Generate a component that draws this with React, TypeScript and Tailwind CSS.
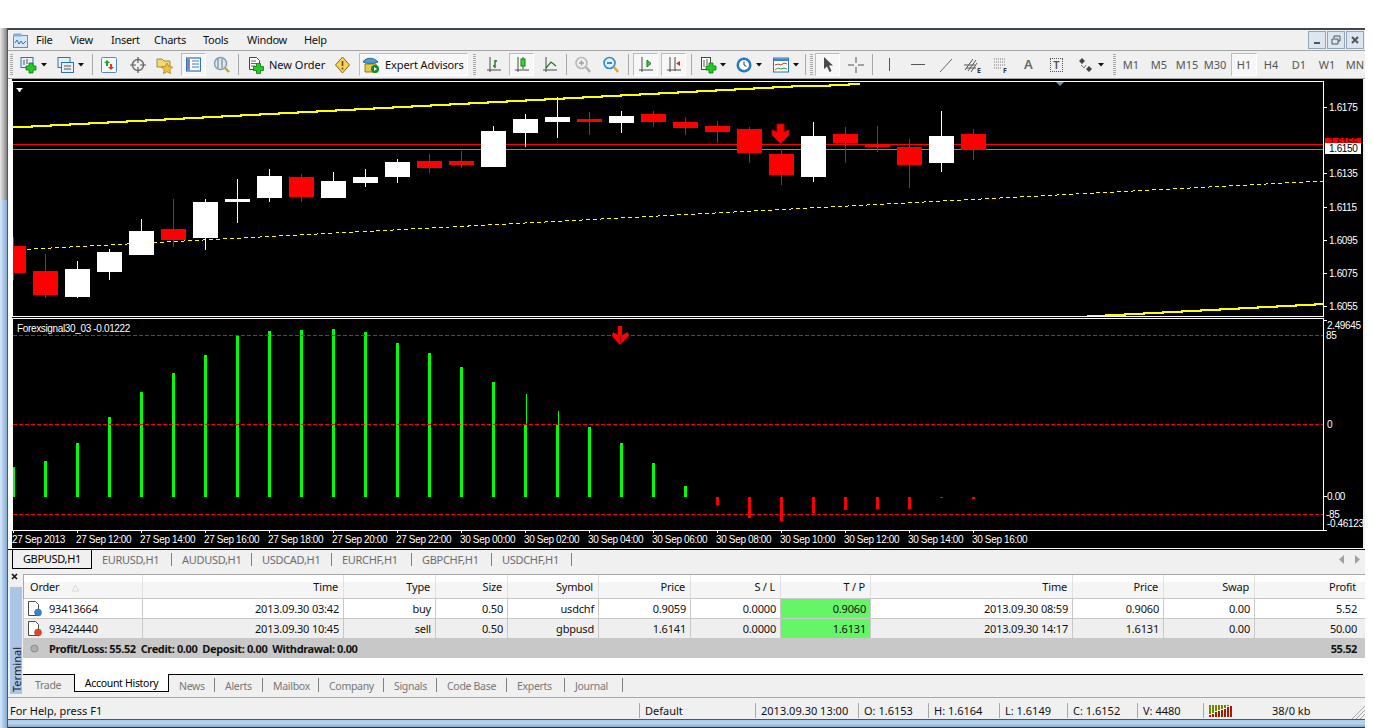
import type { ReactNode } from "react";

// candle: high, body top, body bottom, low, colour. x comes from the index
const candles: [number, number, number, number, "r" | "w"][] = [
  [237, 246, 273, 280, "r"],
  [254, 271, 295, 298, "r"],
  [261, 269, 297, 298, "w"],
  [249, 252, 272, 280, "w"],
  [219, 231, 255, 255, "w"],
  [199, 229, 240, 247, "r"],
  [199, 202, 238, 250, "w"],
  [179, 199, 202, 223, "w"],
  [169, 176, 198, 202, "w"],
  [174, 177, 197, 202, "r"],
  [172, 181, 198, 198, "w"],
  [169, 177, 183, 187, "w"],
  [159, 162, 177, 183, "w"],
  [154, 161, 168, 173, "r"],
  [151, 161, 165, 168, "r"],
  [126, 131, 167, 167, "w"],
  [114, 119, 133, 147, "w"],
  [97, 117, 122, 138, "w"],
  [112, 119, 122, 135, "r"],
  [111, 116, 123, 133, "w"],
  [111, 114, 122, 127, "r"],
  [117, 122, 128, 135, "r"],
  [121, 126, 132, 143, "r"],
  [127, 129, 153, 163, "r"],
  [149, 154, 175, 185, "r"],
  [122, 136, 177, 182, "w"],
  [127, 134, 143, 163, "r"],
  [126, 144, 147, 152, "r"],
  [139, 147, 165, 188, "r"],
  [111, 136, 163, 172, "w"],
  [129, 134, 150, 160, "r"],
];

// histogram end point for each bar, baseline is y=497
const bars = [
  467, 461, 443, 417, 392, 373, 355, 336, 331, 330, 329, 332, 343, 353, 367, 382, 425, 425, 427, 443, 463,
  486, 505, 518, 521, 513, 510, 509, 509, 498, 499,
];

const dates = [
  "27 Sep 2013",
  "27 Sep 12:00",
  "27 Sep 14:00",
  "27 Sep 16:00",
  "27 Sep 18:00",
  "27 Sep 20:00",
  "27 Sep 22:00",
  "30 Sep 00:00",
  "30 Sep 02:00",
  "30 Sep 04:00",
  "30 Sep 06:00",
  "30 Sep 08:00",
  "30 Sep 10:00",
  "30 Sep 12:00",
  "30 Sep 14:00",
  "30 Sep 16:00",
];

const prices: [string, number][] = [
  ["1.6175", 107],
  ["1.6135", 173],
  ["1.6115", 207],
  ["1.6095", 240],
  ["1.6075", 273],
  ["1.6055", 306],
];

const indicatorLabels: [string, number, number][] = [
  ["2.49645", 1327, 325],
  ["85", 1326, 335],
  ["0", 1327, 424],
  ["0.00", 1327, 496],
  ["-85", 1326, 514],
  ["-0.46123", 1327, 523],
];

function stairs(x0: number, y0: number, x1: number, slope: number) {
  let d = `M${x0} ${y0}`;
  for (let x = x0; x < x1; x += 19) {
    const y = Math.round(y0 - slope * (x - x0));
    const nx = Math.min(x + 19, x1);
    d += ` L${x} ${y} L${nx} ${y}`;
  }
  return d;
}

function ChartArea() {
  return (
    <svg
      width={1351}
      height={469}
      viewBox="12 79 1351 469"
      className="block shrink-0 bg-black font-['Liberation_Sans',sans-serif] tracking-[-0.35px]"
    >
      {/* price pane */}
      <line x1={13} y1={250} x2={1323} y2={181} stroke="#ffff00" strokeDasharray="4 3" shapeRendering="crispEdges" />
      <path d={stairs(13, 127, 860, 0.052)} stroke="#ffff00" strokeWidth={2} fill="none" shapeRendering="crispEdges" />
      <path d={stairs(1087, 316, 1323, 0.052)} stroke="#ffff00" strokeWidth={2} fill="none" shapeRendering="crispEdges" />
      <rect x={13} y={144} width={1310} height={1} fill="#ff0000" />
      <rect x={13} y={149} width={1310} height={1} fill="#8a8a8a" />
      {candles.map(([hi, top, bot, lo, c], i) => {
        const x = 13 + 32 * i;
        const color = c === "r" ? "#ff0000" : "#ffffff";
        return (
          <g key={x} fill={color}>
            <rect x={x} y={hi} width={1} height={lo - hi} />
            <rect x={x - 12} y={top} width={25} height={bot - top} />
          </g>
        );
      })}
      <polygon
        points="777,124 784,124 784,132 789,130 789,135 781,143 780,143 772,135 772,130 777,132"
        fill="#ff0000"
        stroke="#c00000"
      />
      <polygon points="16,88 23,88 21,90 20,92 19,92 18,90" fill="#ffffff" />
      <polygon points="1055,81 1065,81 1060,86" fill="#6f8ea3" />
      <rect x={12} y={81} width={1311} height={235} fill="none" stroke="#ffffff" strokeWidth={1} transform="translate(0.5 0.5)" />
      {prices.map(([label, y]) => (
        <g key={label}>
          <rect x={1324} y={y} width={3} height={1} fill="#ffffff" />
          <text x={1329} y={y + 4} className="fill-white text-[10px]">
            {label}
          </text>
        </g>
      ))}
      <rect x={1325} y={138} width={36} height={6} fill="#ff0000" />
      <text x={1329} y={146} className="fill-[#300] text-[10px]">
        1.6155
      </text>
      <rect x={1325} y={143} width={36} height={11} fill="#ffffff" />
      <text x={1329} y={152} className="fill-black text-[10px]">
        1.6150
      </text>

      {/* indicator pane */}
      {bars.map((end, i) => {
        const x = 12 + 32 * i;
        const color = end < 497 ? "#00ff00" : "#ff0000";
        return (
          <rect key={x} x={x} y={Math.min(end, 497)} width={3} height={Math.abs(497 - end)} fill={color} />
        );
      })}
      <rect x={526} y={394} width={1} height={31} fill="#00ff00" />
      <rect x={558} y={411} width={1} height={14} fill="#00ff00" />
      {[335, 424, 514].map((y) => (
        <line key={y} x1={13} y1={y + 0.5} x2={1323} y2={y + 0.5} stroke="#ff0000" strokeDasharray="4 2" />
      ))}
      <polygon points="618,326 622,326 622,335 628,332 629,336 621,344 619,344 612,336 613,332 618,335" fill="#ff0000" />
      <rect x={620} y={335} width={1} height={8} fill="#a00000" />
      <text x={17} y={332} className="fill-white text-[10px]">
        Forexsignal30_03 -0.01222
      </text>
      <rect x={12} y={318} width={1311} height={212} fill="none" stroke="#ffffff" strokeWidth={1} transform="translate(0.5 0.5)" />
      {[320, 496, 530].map((y) => (
        <rect key={y} x={1324} y={y} width={3} height={1} fill="#ffffff" />
      ))}
      {indicatorLabels.map(([label, x, y]) => (
        <text key={label} x={x} y={y + 4} className="fill-white text-[10px]">
          {label}
        </text>
      ))}
      {dates.map((label, i) => (
        <g key={label}>
          <rect x={13 + 64 * i} y={531} width={1} height={2} fill="#ffffff" />
          <text x={12 + 64 * i} y={543} className="fill-white text-[10px]">
            {label}
          </text>
        </g>
      ))}
    </svg>
  );
}

function Grip({ className }: { className: string }) {
  return (
    <div
      className={`h-[22px] w-[3px] shrink-0 bg-[repeating-linear-gradient(to_bottom,#a8a8a8_0,#a8a8a8_1px,#f0f0f0_1px,#f0f0f0_2px)] ${className}`}
    />
  );
}

function Sep({ className }: { className: string }) {
  return <div className={`h-[21px] w-px shrink-0 bg-[#a8a8a8] ${className}`} />;
}

function Caret({ className }: { className: string }) {
  return (
    <svg width={6} height={4} viewBox="0 0 6 4" className={`shrink-0 ${className}`}>
      <polygon points="0,0 6,0 3,3.5" fill="#111111" />
    </svg>
  );
}

function Ico({ w = 17, h = 18, className, children }: { w?: number; h?: number; className: string; children: ReactNode }) {
  return (
    <svg width={w} height={h} viewBox={`0 0 ${w} ${h}`} className={`shrink-0 ${className}`}>
      {children}
    </svg>
  );
}

function Box({ className, children }: { className: string; children: ReactNode }) {
  return (
    <div
      className={`flex h-[23px] shrink-0 items-center justify-center border border-b-white border-l-[#bcbcbc] border-r-white border-t-[#bcbcbc] bg-[#f7f7f7] ${className}`}
    >
      {children}
    </div>
  );
}

const plus = (x: number, y: number) => (
  <path
    d={`M${x + 3} ${y}h4v3h3v4h-3v3h-4v-3h-3v-4h3z`}
    fill="#22cc22"
    stroke="#0a7a0a"
    strokeWidth={0.8}
  />
);

const axes = (
  <path d="M3 1v15M0 14h14" stroke="#4a4a4a" strokeWidth={1} fill="none" />
);

function Toolbar() {
  return (
    <div className="flex h-[28px] shrink-0 items-center overflow-hidden border-b border-[#a4a4a4] bg-[#f0f0f0]">
      <Grip className="ml-[2px]" />
      <Ico className="ml-[7px]">
        <rect x={1} y={1.5} width={12} height={10} fill="#e6f0fb" stroke="#2f72b8" />
        <path d="M4 4v5M7 3v5" stroke="#555555" />
        {plus(6, 7)}
      </Ico>
      <Caret className="ml-[4px]" />
      <Ico className="ml-[10px]">
        <rect x={1} y={1.5} width={12} height={10} fill="#e6f0fb" stroke="#2f72b8" />
        <rect x={4.5} y={6.5} width={12} height={10} fill="#e6f0fb" stroke="#2f72b8" />
        <path d="M7 10h7M7 13h7" stroke="#555555" />
      </Ico>
      <Caret className="ml-[4px]" />
      <Sep className="ml-[8px]" />
      <Ico w={16} className="ml-[8px]">
        <rect x={0.5} y={1.5} width={15} height={15} rx={1} fill="#f4f8fd" stroke="#4d8cc8" />
        <path d="M6 4l3 3H7v3H5V7H3z" fill="#1fa81f" />
        <path d="M10 14l-3-3h2V8h2v3h2z" fill="#e03b20" />
      </Ico>
      <Ico w={16} className="ml-[13px]">
        <circle cx={8} cy={9} r={5.5} fill="none" stroke="#6a6a6a" strokeWidth={1.4} />
        <path d="M8 1v6M8 11v6M0 9h6M10 9h6" stroke="#5a5a5a" strokeWidth={1.2} />
      </Ico>
      <Ico className="ml-[10px]">
        <path d="M1 3h5l2 2h6v6H1z" fill="#f3d778" stroke="#a68a30" />
        <path d="M11 7l1.8 3.6 3.9.5-2.9 2.7.8 3.9-3.6-2-3.6 2 .8-3.9-2.9-2.7 3.9-.5z" fill="#f2c13c" stroke="#a57d14" strokeWidth={0.7} />
      </Ico>
      <Box className="ml-[8px] w-[25px]">
        <Ico w={15} h={15} className="">
          <rect x={0.5} y={1} width={14} height={13} fill="#ffffff" stroke="#2f72b8" strokeWidth={1.2} />
          <rect x={1} y={1.5} width={3} height={12} fill="#5b9ad8" />
          <path d="M6 4h7M6 7h7M6 10h7" stroke="#3a78bc" />
          <path d="M2 4h1M2 7h1M2 10h1" stroke="#e03b20" />
        </Ico>
      </Box>
      <Ico className="ml-[7px]">
        <circle cx={7.5} cy={7.5} r={6} fill="#dbe9f6" stroke="#7a9ab8" strokeWidth={1.4} />
        <path d="M5 3v9M9 3v9" stroke="#707070" />
        <path d="M12 12l4 4" stroke="#c0a050" strokeWidth={2.4} />
      </Ico>
      <Sep className="ml-[8px]" />
      <Ico w={16} className="ml-[9px]">
        <path d="M1.5 1.5h7l3 3v9h-10z" fill="#ffffff" stroke="#444444" />
        <path d="M3 5h5M3 7.5h6M3 10h4" stroke="#666666" />
        {plus(5.5, 7.5)}
      </Ico>
      <span className="ml-[5px] w-[56px] shrink-0 whitespace-nowrap pt-[2px] text-[11px] text-[#111]">New Order</span>
      <Ico w={15} className="ml-[10px]">
        <polygon points="7.5,1 14.5,9 7.5,17 0.5,9" fill="#f7d25a" stroke="#8a6a10" />
        <path d="M7.5 5v5M7.5 11.5v2" stroke="#6b4a00" strokeWidth={1.6} />
      </Ico>
      <Box className="ml-[9px] w-[109px] justify-start pl-[2px]">
        <Ico w={18} className="">
          <path d="M3 8h11l1 8H3z" fill="#e5c94a" stroke="#977a1a" />
          <path d="M1 6c3-5 11-5 15 0-4 2-11 2-15 0z" fill="#4d9ad4" stroke="#2f6a9c" />
          <circle cx={13} cy={13} r={4} fill="#148a2c" />
          <path d="M12 11l3 2-3 2z" fill="#ffffff" />
        </Ico>
        <span className="ml-[5px] whitespace-nowrap pt-[2px] text-[11px] tracking-[-0.1px] text-[#111]">Expert Advisors</span>
      </Box>
      <Grip className="ml-[5px]" />
      <Ico w={14} className="ml-[11px]">
        {axes}
        <path d="M8 4v8M8 5h2M6 10h2" stroke="#177a17" strokeWidth={1.4} />
      </Ico>
      <Box className="ml-[8px] w-[25px]">
        <Ico w={14} className="">
          {axes}
          <path d="M8 1v12" stroke="#177a17" />
          <rect x={6} y={3} width={4} height={7} fill="#33d833" stroke="#177a17" />
        </Ico>
      </Box>
      <Ico w={14} className="ml-[9px]">
        {axes}
        <path d="M3 12l5-6 5 4" stroke="#177a17" strokeWidth={1.2} fill="none" />
      </Ico>
      <Sep className="ml-[9px]" />
      <Ico w={16} className="ml-[8px]">
        <circle cx={6.5} cy={7} r={5.5} fill="#eeeeee" stroke="#b8b8b8" strokeWidth={1.6} />
        <path d="M4 7h5M6.5 4.5v5" stroke="#a0a0a0" strokeWidth={1.4} />
        <path d="M11 11l4 5" stroke="#b0b0b0" strokeWidth={2.4} />
      </Ico>
      <Ico w={16} className="ml-[12px]">
        <circle cx={6.5} cy={7} r={5.5} fill="#dff0ff" stroke="#2f8ad0" strokeWidth={1.6} />
        <path d="M4 7h5" stroke="#1d6aa8" strokeWidth={1.6} />
        <path d="M11 11l4 5" stroke="#d8a830" strokeWidth={2.4} />
      </Ico>
      <Sep className="ml-[9px]" />
      <Box className="ml-[4px] w-[25px]">
        <Ico w={14} className="">
          {axes}
          <polygon points="8,4 12,7.5 8,11" fill="#44c844" stroke="#177a17" />
        </Ico>
      </Box>
      <Box className="ml-[3px] w-[25px]">
        <Ico w={14} className="">
          {axes}
          <path d="M8 1v14" stroke="#4a4a4a" />
          <polygon points="13,5 13,10 9,7.5" fill="#d0301a" />
        </Ico>
      </Box>
      <Sep className="ml-[5px]" />
      <Ico className="ml-[8px]">
        <rect x={1.5} y={1.5} width={9} height={12} fill="#ffffff" stroke="#444444" />
        <path d="M4 4v7M7 3v6" stroke="#555555" />
        {plus(6, 7)}
      </Ico>
      <Caret className="ml-[3px]" />
      <Ico w={16} className="ml-[10px]">
        <circle cx={8} cy={9} r={7.5} fill="#1f7ac8" />
        <circle cx={8} cy={9} r={5} fill="#ffffff" />
        <path d="M8 5.5V9l2.5 1.5" stroke="#333333" fill="none" />
      </Ico>
      <Caret className="ml-[4px]" />
      <Ico w={16} className="ml-[11px]">
        <rect x={0.5} y={2} width={15} height={14} fill="#ffffff" stroke="#2f72b8" />
        <rect x={1} y={2.5} width={14} height={2.5} fill="#3a86d0" />
        <path d="M2 9l3-1 3 1 3-2 3 1" stroke="#c83a20" fill="none" />
        <path d="M2 14l3-2 3 1 3-1 3 1" stroke="#2ca02c" fill="none" />
      </Ico>
      <Caret className="ml-[4px]" />
      <Sep className="ml-[6px]" />
      <Grip className="ml-[4px]" />
      <Box className="ml-[2px] w-[25px]">
        <Ico w={12} h={17} className="">
          <polygon points="2,1 2,13 5,10.5 7.5,16 9.5,15 7,9.5 11,9.5" fill="#4a4a4a" />
        </Ico>
      </Box>
      <Ico w={16} className="ml-[8px]">
        <path d="M8 1v6M8 11v6M0 9h6M10 9h6" stroke="#555555" />
      </Ico>
      <Sep className="ml-[8px]" />
      <div className="ml-[16px] h-[13px] w-px shrink-0 bg-[#555]" />
      <div className="ml-[21px] h-px w-[14px] shrink-0 bg-[#555]" />
      <Ico w={14} className="ml-[14px]">
        <path d="M1 16L13 3" stroke="#666666" />
      </Ico>
      <Ico w={18} className="ml-[11px]">
        <path d="M1 14L9 3M4 15L12 4M7 16L13 7M0 9h11M2 12h10" stroke="#555555" fill="none" />
        <text x={13} y={17} className="fill-[#333] text-[7px] font-bold">E</text>
      </Ico>
      <Ico w={14} className="ml-[12px]">
        <path d="M0 3h12M0 6h12M0 9h12M0 12h8" stroke="#777777" strokeDasharray="1 1" />
        <text x={9} y={17} className="fill-[#333] text-[7px] font-bold">F</text>
      </Ico>
      <span className="ml-[16px] w-[10px] shrink-0 text-[13px] font-semibold leading-none text-[#666]">A</span>
      <div className="ml-[16px] flex h-[14px] w-[13px] shrink-0 items-center justify-center border border-dotted border-[#555] text-[11px] font-semibold leading-none text-[#555]">
        T
      </div>
      <Ico w={16} className="ml-[15px]">
        <path d="M4 2l3 3-3 3-3-3zM11 10l3 3-3 3-3-3z" fill="#444444" />
        <path d="M3 9l3 3 2-3" stroke="#777777" fill="none" />
      </Ico>
      <Caret className="ml-[4px]" />
      <Grip className="ml-[9px]" />
      <div className="ml-px flex shrink-0 items-center text-[11px] text-[#555]">
        <span className="w-[28px] pt-[2px] text-center">M1</span>
        <span className="w-[28px] pt-[2px] text-center">M5</span>
        <span className="w-[28px] pt-[2px] text-center">M15</span>
        <span className="w-[28px] pt-[2px] text-center">M30</span>
        <Box className="ml-[2px] w-[26px]">
          <span className="pt-[2px]">H1</span>
        </Box>
        <span className="w-[28px] pt-[2px] text-center">H4</span>
        <span className="w-[28px] pt-[2px] text-center">D1</span>
        <span className="w-[28px] pt-[2px] text-center">W1</span>
        <span className="w-[28px] pt-[2px] text-center">MN</span>
      </div>
    </div>
  );
}

const menus: [string, string][] = [
  ["File", "w-[34px]"],
  ["View", "w-[41px]"],
  ["Insert", "w-[43px]"],
  ["Charts", "w-[49px]"],
  ["Tools", "w-[44px]"],
  ["Window", "w-[57px]"],
  ["Help", "w-[40px]"],
];

function MenuBar() {
  return (
    <div className="flex h-[21px] shrink-0 items-center border-b border-[#a4a4a4] bg-[#f0f0f0]">
      <Ico w={15} h={15} className="ml-[5px] mr-[8px]">
        <rect x={0.5} y={2.5} width={14} height={12} fill="#d8e6f6" stroke="#5b8fc8" />
        <rect x={0.5} y={0.5} width={8} height={3} fill="#7fb0e0" />
        <path d="M2 10l2-3 2 4 2-3 2 3 3-3" stroke="#2f72b8" fill="none" />
      </Ico>
      {menus.map(([label, w]) => (
        <span key={label} className={`${w} shrink-0 text-[11px] tracking-[-0.3px] text-[#111]`}>
          {label}
        </span>
      ))}
      <div className="ml-auto mr-px flex gap-px">
        <div className="flex h-[18px] w-[18px] items-end justify-center border border-[#8ea6b8] bg-[#dbe6f0] pb-[4px]">
          <div className="h-[2px] w-[6px] bg-[#555]" />
        </div>
        <div className="flex h-[18px] w-[18px] items-center justify-center border border-[#8ea6b8] bg-[#dbe6f0]">
          <Ico w={10} h={10} className="">
            <path d="M3 3V1h6v5H7M1 4h6v5H1z" stroke="#555555" fill="none" />
          </Ico>
        </div>
        <div className="flex h-[18px] w-[18px] items-center justify-center border border-[#8ea6b8] bg-[#dbe6f0]">
          <Ico w={10} h={10} className="">
            <path d="M2 2l6 6M8 2l-6 6" stroke="#555555" strokeWidth={2} />
          </Ico>
        </div>
      </div>
    </div>
  );
}

const chartTabs = ["EURUSD,H1", "AUDUSD,H1", "USDCAD,H1", "EURCHF,H1", "GBPCHF,H1", "USDCHF,H1"];

function ChartTabs() {
  return (
    <div className="flex h-[21px] shrink-0 items-start border-t border-black bg-[#f0f0f0] pl-[4px] text-[11px] tracking-[-0.3px]">
      <div className="flex h-[19px] w-[80px] shrink-0 items-center justify-center border-x border-b border-black pt-px text-black">
        GBPUSD,H1
      </div>
      {chartTabs.map((t) => (
        <div key={t} className="mt-[3px] flex h-[13px] w-[80px] shrink-0 items-center border-r border-[#808080] pl-[10px] pt-px text-[#6d6d6d]">
          {t}
        </div>
      ))}
      <div className="ml-auto mr-[5px] mt-[5px] flex gap-[11px]">
        <Ico w={5} h={9} className="">
          <polygon points="5,0 5,9 0,4.5" fill="#a0a0a0" />
        </Ico>
        <Ico w={5} h={9} className="">
          <polygon points="0,0 0,9 5,4.5" fill="#a0a0a0" />
        </Ico>
      </div>
    </div>
  );
}

const cols = [
  "w-[119px]",
  "w-[201px]",
  "w-[92px]",
  "w-[72px]",
  "w-[91px]",
  "w-[92px]",
  "w-[90px]",
  "w-[90px]",
  "w-[202px]",
  "w-[91px]",
  "w-[91px]",
  "w-[110px]",
];

const heads = ["", "Time", "Type", "Size", "Symbol", "Price", "S / L", "T / P", "Time", "Price", "Swap", "Profit"];

const rows = [
  {
    id: "93413664",
    dot: "#2c86d8",
    cells: ["2013.09.30 03:42", "buy", "0.50", "usdchf", "0.9059", "0.0000", "0.9060", "2013.09.30 08:59", "0.9060", "0.00", "5.52"],
    bg: "bg-white",
  },
  {
    id: "93424440",
    dot: "#e8421e",
    cells: ["2013.09.30 10:45", "sell", "0.50", "gbpusd", "1.6141", "0.0000", "1.6131", "2013.09.30 14:17", "1.6131", "0.00", "50.00"],
    bg: "bg-[#efefef]",
  },
];

function OrderIcon({ dot }: { dot: string }) {
  return (
    <Ico w={15} h={17} className="ml-[3px]">
      <path d="M1.5 1.5h7l3 3v11h-10z" fill="#ffffff" stroke="#4a4a4a" />
      <circle cx={11} cy={12.5} r={3.5} fill={dot} stroke="#555555" strokeWidth={0.5} />
    </Ico>
  );
}

function Table() {
  return (
    <div className="flex-1 text-[11px] tracking-[-0.2px] text-[#111]">
      <div className="flex h-[24px] border-l border-t border-[#a8a8a8] border-b-0 bg-[linear-gradient(to_bottom,#ffffff_0,#ffffff_30%,#f5f5f5_30%)]">
        <div className={`${cols[0]} flex shrink-0 items-center border-r border-[#e0e0e0] pl-[6px] pt-[2px]`}>
          Order
          <Ico w={9} h={8} className="ml-[12px]">
            <path d="M4.5 1L8 7H1z" fill="none" stroke="#d8d8d8" />
          </Ico>
        </div>
        {heads.slice(1).map((h, i) => (
          <div
            key={i}
            className={`${cols[i + 1]} flex shrink-0 items-center justify-end border-r border-[#e0e0e0] pr-[5px] pt-[2px] last:border-r-0 last:pr-[9px]`}
          >
            {h}
          </div>
        ))}
      </div>
      <div className="h-px border-l border-[#a8a8a8] bg-[#c8c8c8]" />
      {rows.map((r) => (
        <div key={r.id} className={`flex h-[20px] border-b border-l border-[#c8c8c8] ${r.bg}`}>
          <div className={`${cols[0]} flex shrink-0 items-center border-r border-[#c8c8c8]`}>
            <OrderIcon dot={r.dot} />
            <span className="ml-[7px] pt-[2px]">{r.id}</span>
          </div>
          {r.cells.map((c, i) => (
            <div
              key={i}
              className={`${cols[i + 1]} flex shrink-0 items-center justify-end border-r border-[#c8c8c8] pr-[4px] pt-[2px] last:border-r-0 last:pr-[8px] ${i === 6 ? "bg-[#66f566]" : ""}`}
            >
              {c}
            </div>
          ))}
        </div>
      ))}
      <div className="flex h-[19px] items-center bg-[#c8c8c8] font-bold tracking-[-0.38px]">
        <Ico w={9} h={9} className="ml-[7px]">
          <circle cx={4.5} cy={4.5} r={3.5} fill="#b0b0b0" stroke="#8a8a8a" />
        </Ico>
        <span className="ml-[10px] whitespace-pre pt-[2px]">Profit/Loss: 55.52  Credit: 0.00  Deposit: 0.00  Withdrawal: 0.00</span>
        <span className="ml-auto pr-[8px] pt-[2px]">55.52</span>
      </div>
      <div className="h-[16px] bg-white" />
    </div>
  );
}

const bottomTabs: [string, string][] = [
  ["News", "w-[46px]"],
  ["Alerts", "w-[48px]"],
  ["Mailbox", "w-[56px]"],
  ["Company", "w-[65px]"],
  ["Signals", "w-[53px]"],
  ["Code Base", "w-[70px]"],
  ["Experts", "w-[58px]"],
  ["Journal", "w-[58px]"],
];

function BottomTabs() {
  return (
    <div className="mr-[2px] flex h-[18px] items-start border-t border-black text-[10.5px] tracking-[-0.3px] text-[#777]">
      <span className="mt-[2px] w-[51px] shrink-0 pl-[12px] pt-px">Trade</span>
      <div className="-mt-px flex h-[18px] w-[95px] shrink-0 items-center justify-center border-x border-b border-black bg-white pt-[2px] text-black">
        Account History
      </div>
      {bottomTabs.map(([t, w]) => (
        <div key={t} className={`${w} mt-[3px] flex h-[14px] shrink-0 items-center border-r border-[#808080] pl-[10px] pt-[3px]`}>
          {t}
        </div>
      ))}
    </div>
  );
}

function Terminal() {
  return (
    <div className="flex h-[127px] shrink-0 bg-[#f0f0f0]">
      <div className="flex w-[15px] shrink-0 flex-col">
        <div className="h-[17px] pl-[3px] pt-[3px]">
          <Ico w={8} h={8} className="block">
            <path d="M1 1l5 5M6 1L1 6" stroke="#111111" strokeWidth={1.6} />
          </Ico>
        </div>
        <div className="ml-[2px] flex h-[107px] w-[12px] items-end justify-center bg-[#aac5e6]">
          <span className="rotate-180 pt-[2px] text-[11px] leading-none text-[#222] [writing-mode:vertical-rl]">Terminal</span>
        </div>
      </div>
      <div className="flex min-w-0 flex-1 flex-col pt-[4px]">
        <Table />
        <BottomTabs />
        <div className="h-[5px]" />
      </div>
    </div>
  );
}

const statusCells: [string, string][] = [
  ["Default", "w-[116px]"],
  ["2013.09.30 13:00", "w-[103px]"],
  ["O: 1.6153", "w-[70px]"],
  ["H: 1.6164", "w-[71px]"],
  ["L: 1.6149", "w-[68px]"],
  ["C: 1.6152", "w-[70px]"],
  ["V: 4480", "w-[66px]"],
];

const signal = [2, 3, 5, 6, 7, 8, 10, 11];

function StatusBar() {
  return (
    <div className="flex h-[23px] shrink-0 items-center border-b border-t border-b-[#555] border-t-[#a8a8a8] bg-[#f0f0f0] pt-[4px] text-[11px] text-[#111]">
      <span className="w-[631px] shrink-0 pl-[2px] pt-[2px]">For Help, press F1</span>
      {statusCells.map(([t, w]) => (
        <div key={t} className={`${w} flex h-[15px] shrink-0 items-center border-l border-[#a8a8a8] pl-[5px] pt-[2px]`}>
          {t}
        </div>
      ))}
      <div className="flex h-[15px] w-[69px] shrink-0 items-center border-l border-[#a8a8a8] pl-[5px]">
        <Ico w={24} h={12} className="">
          {signal.map((h, i) => (
            <g key={i}>
              <rect x={i * 3} y={0} width={2} height={Math.max(12 - h - 1, 0)} fill="#6b8a00" />
              <rect x={i * 3} y={12 - h} width={2} height={h} fill="#a01c00" />
            </g>
          ))}
        </Ico>
      </div>
      <span className="whitespace-nowrap pt-[2px]">38/0 kb</span>
      <Ico w={15} h={15} className="ml-auto self-end">
        <path d="M15 2L2 15M15 6L6 15M15 10L10 15" stroke="#a8a8a8" />
      </Ico>
    </div>
  );
}

export default function App() {
  return (
    <div className="flex h-[728px] w-[1373px] flex-col overflow-hidden bg-white font-['Noto_Sans',sans-serif]">
      <div className="h-[28px] shrink-0" />
      <div className="flex min-h-0 flex-1">
        <div className="flex w-[7px] shrink-0 flex-col">
          <div className="h-[172px] bg-[linear-gradient(to_right,#e8e8e8,#b8b8b8,#808080)]" />
          <div className="flex-1 bg-[linear-gradient(to_right,#d8e8f8,#a8c8ec,#88a8cc)]" />
        </div>
        <div className="flex w-[1358px] shrink-0 flex-col border-l border-[#555] border-t-2 border-t-[#3c4650]">
          <MenuBar />
          <Toolbar />
          <div className="flex shrink-0 bg-[#f0f0f0]">
            <div className="w-[4px] shrink-0 bg-white" />
            <ChartArea />
          </div>
          <div className="h-px shrink-0 bg-white" />
          <ChartTabs />
          <Terminal />
          <StatusBar />
          <div className="flex-1 border-b border-[#333] bg-[linear-gradient(to_bottom,#a8cdf0,#b8d4f0,#88a8c8)]" />
        </div>
      </div>
    </div>
  );
}
